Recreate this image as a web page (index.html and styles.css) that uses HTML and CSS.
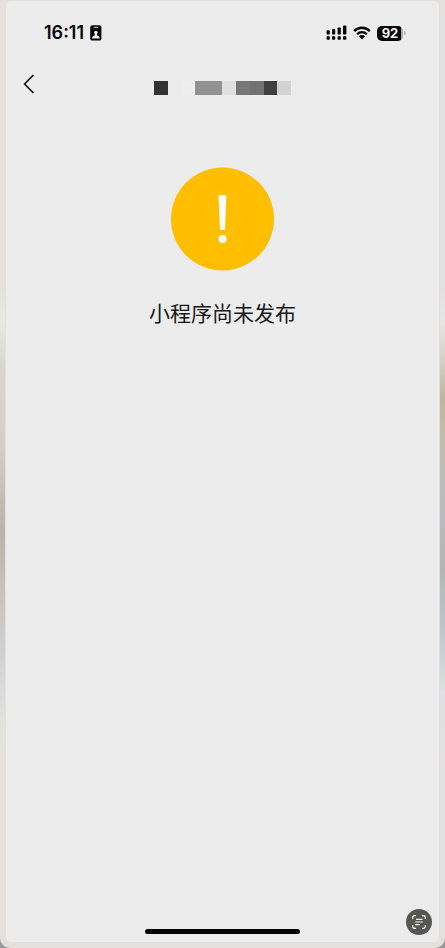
FILE: index.html
```html
<!DOCTYPE html>
<html lang="zh-CN">
<head>
<meta charset="utf-8">
<meta name="viewport" content="width=device-width, initial-scale=1">
<title>小程序</title>
<link rel="stylesheet" href="styles.css">
</head>
<body>
<div class="frame">
  <div class="screen">
    <div class="status">
      <div class="status-group">
        <time class="clock">16:11</time>
        <svg class="badge-icon" width="12" height="16" viewBox="0 0 12 16" aria-hidden="true">
          <rect x="0.2" y="0.2" width="11.2" height="15.4" rx="2.2" fill="#050505"/>
          <rect x="3.6" y="1.7" width="4.6" height="1.3" rx="0.6" fill="#aaa"/>
          <circle cx="5.9" cy="7.6" r="1.8" fill="#ececec"/>
          <path d="M2.1 13.6V13c0-1.5 1.2-2.3 2.6-2.6V9h2.4v1.4c1.4.3 2.6 1.1 2.6 2.6v.6z" fill="#ececec"/>
        </svg>
      </div>
      <div class="status-group status-right">
        <svg width="21" height="16" viewBox="0 0 21 16" fill="#050505" aria-hidden="true">
          <rect x="0.6" y="5.2" width="3.2" height="4.4" rx="0.8"/>
          <rect x="6" y="4" width="3.2" height="5.6" rx="0.8"/>
          <rect x="11.6" y="2.4" width="3.2" height="7.2" rx="0.8"/>
          <rect x="17" y="0.6" width="3.4" height="9" rx="0.8"/>
          <rect x="0.6" y="11.2" width="3.2" height="3.6" rx="0.8"/>
          <rect x="6" y="11.2" width="3.2" height="3.6" rx="0.8"/>
          <rect x="11.6" y="11.2" width="3.2" height="3.6" rx="0.8"/>
          <rect x="17" y="11.2" width="3.4" height="3.6" rx="0.8"/>
        </svg>
        <svg width="18" height="14" viewBox="0 0 18 14" aria-hidden="true">
          <path d="M1.2 5.1C5.6.6 12.4.6 16.8 5.1M4.1 8.2c2.8-2.8 7-2.8 9.8 0" fill="none" stroke="#050505" stroke-width="2.3"/>
          <path d="M9 13.4 5.9 10.3c1.8-1.6 4.4-1.6 6.2 0z" fill="#050505"/>
        </svg>
        <div class="battery"><span class="level">92</span><span class="cap"></span></div>
      </div>
    </div>
    <header class="nav">
      <button class="back" type="button" aria-label="返回">
        <svg width="12" height="20" viewBox="0 0 12 20" aria-hidden="true"><path d="M10.4 1 1.6 10l8.8 9" fill="none" stroke="#181818" stroke-width="1.7"/></svg>
      </button>
      <div class="mosaic">
        <i class="c1"></i><i></i><i class="c2"></i><i class="c3"></i><i class="c3"></i><i class="c4"></i><i class="c5"></i><i class="c6"></i><i class="c7"></i><i class="c8"></i>
      </div>
    </header>
    <main class="message">
      <svg width="103" height="104" viewBox="0 0 103 104" aria-hidden="true">
        <circle cx="51.5" cy="52" r="51.5" fill="#ffbe00"/>
        <path d="M47.5 28.2h7.9L54 63h-5z" fill="#fff"/>
        <circle cx="51.5" cy="72" r="4" fill="#fff"/>
      </svg>
      <h1 class="title">小程序尚未发布</h1>
    </main>
    <div class="home"></div>
    <button class="scan" type="button" aria-label="识别文字">
      <svg width="14" height="14" viewBox="0 0 14 14" fill="none" stroke="#f5f5f3" stroke-width="1.2" aria-hidden="true">
        <path d="M.7 4V2.4Q.7.7 2.4.7H4M10 .7h1.6q1.7 0 1.7 1.7V4M13.3 10v1.6q0 1.7-1.7 1.7H10M4 13.3H2.4q-1.7 0-1.7-1.7V10M4 4.4h6.5M3.2 7h7.5M3.2 9.6h4.8"/>
      </svg>
    </button>
  </div>
</div>
</body>
</html>
```
FILE: styles.css
```css
* { box-sizing: border-box; }
body {
  margin: 0;
  background: #999;
  font-family: Inter, "Noto Sans CJK SC", sans-serif;
  color: #181818;
}
.frame {
  min-height: 100vh;
  display: flex;
  padding: 1px 6px 6px;
  border-radius: 0 0 10px 10px;
  background:
    linear-gradient(#e2e1df 30%, #e8e8e6 34%, #d6d5d2 39%, #d0cfcc 47%, #b8b4a9 56%, #c4c2be 62%, #d0cfcf 68%, #e2e2e1 76%, #e2e1df 80%) left / 5px 100% no-repeat,
    linear-gradient(#e2e1df 30%, #e6e6e4 34%, #d4d0c5 38%, #beb59b 42%, #c2bda9 46%, #babdbe 52%, #b4b5b5 60%, #bac5c8 66%, #dde1e1 73%, #e2e1df 80%) right / 5px 100% no-repeat,
    #e2e1df;
}
.screen {
  position: relative;
  flex: 1;
  display: flex;
  flex-direction: column;
  border-radius: 5px;
  background: #ececec;
}
.status {
  display: flex;
  justify-content: space-between;
  align-items: center;
  height: 24px;
  margin-top: 20px;
  padding: 0 33px 0 38px;
}
.status-group { display: flex; align-items: center; gap: 6px; }
.clock { font-size: 18px; line-height: 24px; font-weight: 600; color: #050505; }
.battery { display: flex; align-items: center; gap: 1px; }
.level {
  width: 26px;
  height: 15px;
  border-radius: 5px;
  background: linear-gradient(90deg, #050505 92%, #aaa 92%);
  color: #f4f4f4;
  font-size: 13px;
  line-height: 15px;
  font-weight: 700;
  text-align: center;
}
.cap { width: 2px; height: 4px; border-radius: 0 2px 2px 0; background: #b5b5b5; }
.nav {
  display: grid;
  grid-template-columns: 40px 1fr 40px;
  height: 44px;
  margin-top: 17px;
}
.back {
  align-self: center;
  display: flex;
  height: 44px;
  align-items: center;
  padding: 0 0 0 17px;
  border: 0;
  background: none;
}
.mosaic {
  justify-self: center;
  align-self: center;
  display: grid;
  grid-template-columns: repeat(10, 1fr);
  width: 137px;
  height: 14px;
  margin-top: 8px;
}
.c1 { background: #333; }
.c2 { background: #eee; }
.c3 { background: #929292; }
.c4 { background: #e0e0e0; }
.c5 { background: #777; }
.c6 { background: #717171; }
.c7 { background: #3f3f3f; }
.c8 { background: #d3d3d3; }
.message {
  flex: 1;
  display: flex;
  flex-direction: column;
  align-items: center;
  gap: 28px;
  padding-top: 61px;
}
.title { margin: 0; font-size: 21px; line-height: 30px; font-weight: 400; }
.home {
  align-self: center;
  width: 155px;
  height: 5px;
  margin-bottom: 8px;
  border-radius: 3px;
  background: #000;
}
.scan {
  position: absolute;
  right: 7px;
  bottom: 7px;
  display: grid;
  place-items: center;
  width: 26px;
  height: 26px;
  padding: 0;
  border: 0;
  border-radius: 50%;
  background: #565654;
}
```
